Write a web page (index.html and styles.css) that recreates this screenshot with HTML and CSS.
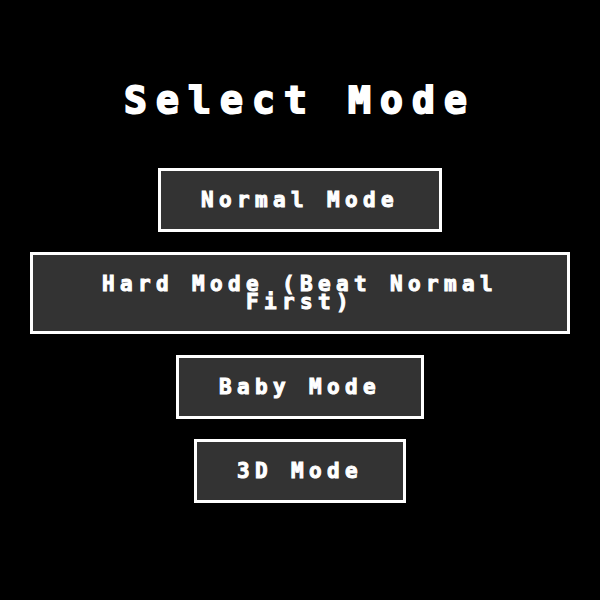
FILE: index.html
```html
<!DOCTYPE html>
<html lang="en">
<head>
<meta charset="utf-8">
<title>Select Mode</title>
<link rel="stylesheet" href="styles.css">
</head>
<body>
<main class="screen">
  <h1 class="title">Select Mode</h1>
  <div class="menu">
    <button class="mode-btn">Normal Mode</button>
    <button class="mode-btn">Hard Mode (Beat Normal First)</button>
    <button class="mode-btn">Baby Mode</button>
    <button class="mode-btn">3D Mode</button>
  </div>
</main>
</body>
</html>
```

FILE: styles.css
```css
html, body {
  margin: 0;
  padding: 0;
  background: #000;
  width: 600px;
  height: 600px;
  overflow: hidden;
}

.screen {
  display: flex;
  flex-direction: column;
  align-items: center;
  padding-top: 84px;
  font-family: "DejaVu Sans Mono", "Liberation Mono", monospace;
  font-weight: bold;
  color: #fff;
}

.title {
  margin: 0 0 52px 0;
  font-size: 38px;
  line-height: 32px;
  letter-spacing: 9.1px;
  font-weight: bold;
  -webkit-text-stroke: 2px #fff;
}

.menu {
  display: flex;
  flex-direction: column;
  align-items: center;
  gap: 20.33px;
  width: 100%;
}

.mode-btn {
  box-sizing: border-box;
  max-width: 540px;
  margin: 0;
  padding: 20px 40px;
  border: 3px solid #fff;
  background: #333;
  color: #fff;
  font-family: "DejaVu Sans Mono", "Liberation Mono", monospace;
  font-weight: bold;
  font-size: 21px;
  line-height: 18px;
  letter-spacing: 5.36px;
  text-align: center;
  border-radius: 0;
  -webkit-text-stroke: 1px #fff;
}
```
